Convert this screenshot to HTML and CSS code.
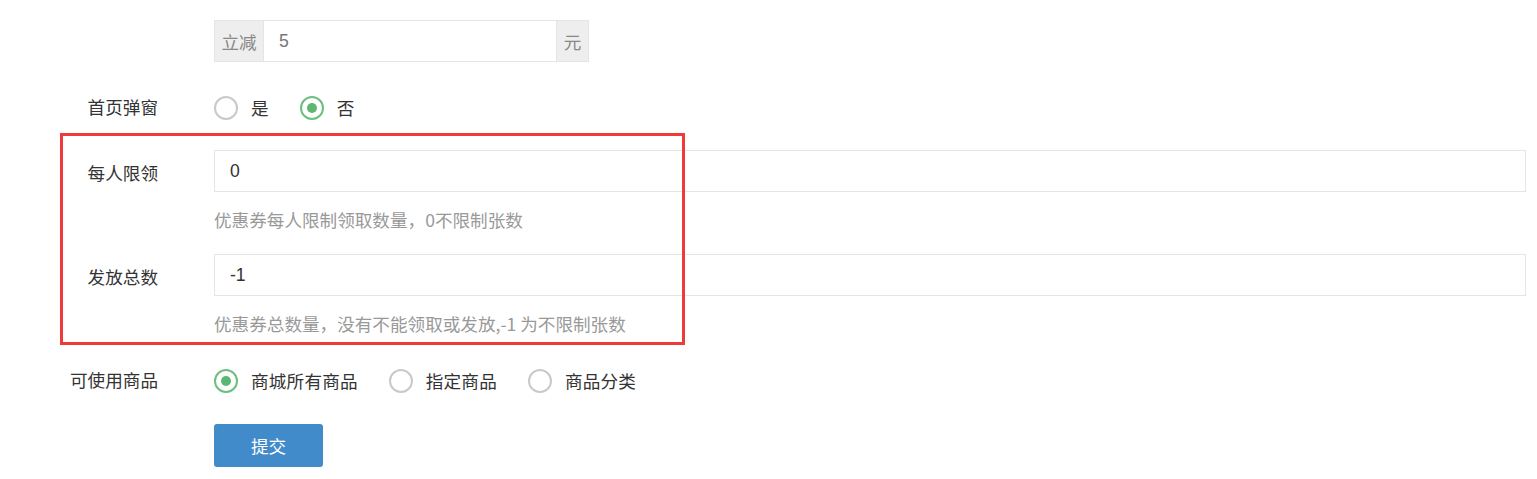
FILE: index.html
```html
<!DOCTYPE html>
<html lang="zh">
<head>
<meta charset="utf-8">
<title>优惠券设置</title>
<link rel="stylesheet" href="styles.css">
</head>
<body>
<form class="form">
  <div class="row row-first">
    <div class="label"></div>
    <div class="control">
      <div class="input-group">
        <span class="addon addon-left">立减</span>
        <span class="group-input muted">5</span>
        <span class="addon addon-right">元</span>
      </div>
    </div>
  </div>

  <div class="row row-radio row-popup">
    <div class="label label-radio">首页弹窗</div>
    <div class="control radios">
      <label class="radio"><span class="circle"></span><span class="rtext">是</span></label>
      <label class="radio"><span class="circle checked"></span><span class="rtext">否</span></label>
    </div>
  </div>

  <div class="row row-limit">
    <div class="label label-input">每人限领</div>
    <div class="control">
      <div class="input">0</div>
      <div class="help">优惠券每人限制领取数量，0不限制张数</div>
    </div>
  </div>

  <div class="row row-total">
    <div class="label label-input">发放总数</div>
    <div class="control">
      <div class="input">-1</div>
      <div class="help">优惠券总数量，没有不能领取或发放,-1 为不限制张数</div>
    </div>
  </div>

  <div class="row row-radio row-goods">
    <div class="label label-radio">可使用商品</div>
    <div class="control radios">
      <label class="radio"><span class="circle checked"></span><span class="rtext">商城所有商品</span></label>
      <label class="radio"><span class="circle"></span><span class="rtext">指定商品</span></label>
      <label class="radio"><span class="circle"></span><span class="rtext">商品分类</span></label>
    </div>
  </div>

  <div class="row row-submit">
    <div class="label"></div>
    <div class="control">
      <button type="button" class="btn">提交</button>
    </div>
  </div>

  <div class="highlight"></div>
</form>
</body>
</html>
```

FILE: styles.css
```css
* { box-sizing: border-box; }

html, body {
  margin: 0;
  padding: 0;
  background: #fff;
}

body {
  font-family: "Noto Sans CJK SC", "Liberation Sans", sans-serif;
  font-size: 17.6px;
  color: #333;
}

.form {
  position: relative;
  padding: 20px 11px 12px 8px;
}

.row {
  display: grid;
  grid-template-columns: 150px 1fr;
  column-gap: 56px;
}

.row-popup { margin-top: 34px; }
.row-limit { margin-top: 30px; }
.row-total { margin-top: 22px; }
.row-goods { margin-top: 33px; }
.row-submit { margin-top: 31px; }

.label {
  text-align: right;
  color: #333;
  white-space: nowrap;
}

.label-input { line-height: 42px; height: 42px; padding-top: 2px; }
.label-radio { line-height: 24px; height: 24px; margin-top: -1px; }

.control { min-width: 0; }

/* input group */
.input-group {
  display: flex;
  width: 375px;
  height: 42px;
  border: 1px solid #e5e5e5;
}

.addon {
  background: #eee;
  color: #888;
  display: flex;
  align-items: center;
  justify-content: center;
}

.addon-left { width: 49px; border-right: 1px solid #e5e5e5; }
.addon-right { width: 32px; border-left: 1px solid #e5e5e5; }

.group-input {
  flex: 1;
  display: flex;
  align-items: center;
  padding-left: 15px;
  font-family: "Liberation Sans", sans-serif;
}

.muted { color: #777; }

/* inputs */
.input {
  height: 42px;
  border: 1px solid #e5e5e5;
  display: flex;
  align-items: center;
  padding-left: 15px;
  color: #333;
  font-family: "Liberation Sans", sans-serif;
}

.help {
  margin-top: 16px;
  line-height: 24px;
  height: 24px;
  color: #999;
  white-space: nowrap;
}

/* radios */
.radios {
  display: flex;
  align-items: center;
  height: 24px;
}

.radio {
  display: flex;
  align-items: center;
  margin-right: 31px;
}

.circle {
  width: 24px;
  height: 24px;
  border-radius: 50%;
  border: 2px solid #c9c9c9;
  display: flex;
  align-items: center;
  justify-content: center;
  flex: none;
}

.circle.checked { border-color: #6cc07f; }

.circle.checked::after {
  content: "";
  width: 10px;
  height: 10px;
  border-radius: 50%;
  background: #5cb870;
}

.rtext {
  margin-left: 13px;
  line-height: 24px;
  color: #333;
  letter-spacing: 0.2px;
}

/* button */
.btn {
  width: 109px;
  height: 43px;
  border: none;
  border-radius: 3px;
  background: #428bca;
  color: #fff;
  font-family: inherit;
  font-size: 17.6px;
  padding: 0;
}

/* red annotation overlay */
.highlight {
  position: absolute;
  left: 60px;
  top: 133px;
  width: 625px;
  height: 212px;
  border: 3px solid #f03a3a;
  pointer-events: none;
}
```
